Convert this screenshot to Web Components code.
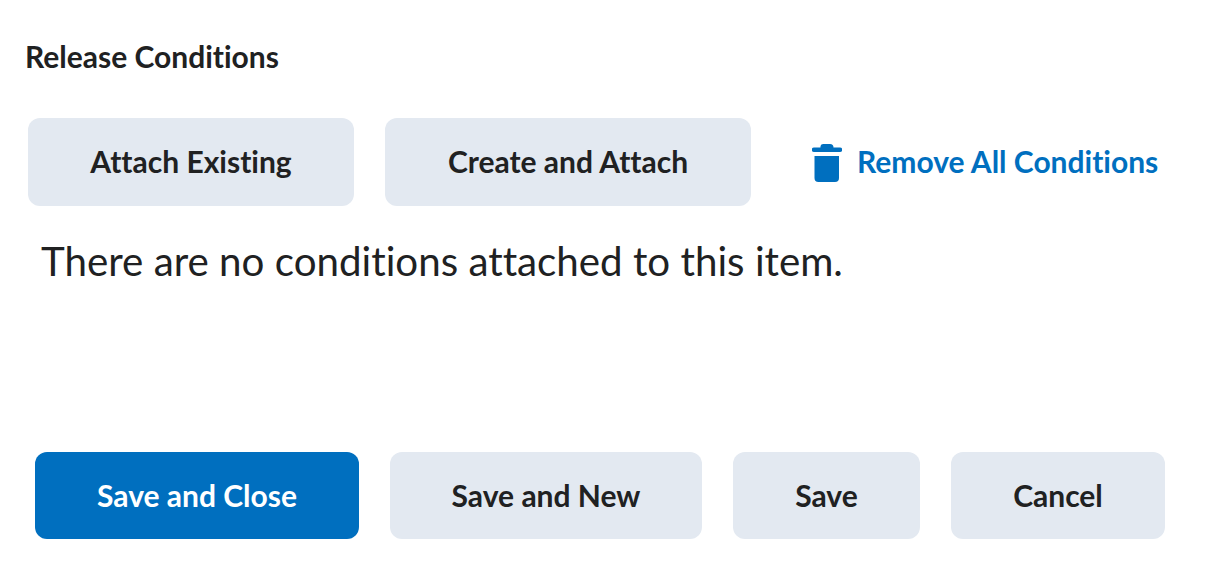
<!DOCTYPE html>
<html><head><meta charset="utf-8"><style>
html,body{margin:0;background:#fff}
body{font-family:Lato,"Noto Sans",sans-serif;color:#202122;width:1226px;height:572px;overflow:hidden;font-variant-ligatures:none}
</style></head><body>
<template id="t-btn"><style>
:host{display:inline-flex;align-items:center;justify-content:center;box-sizing:border-box;height:88px;padding-bottom:2px;border-radius:12px;background:#e3e9f1;color:#202122;font:700 30px Lato,sans-serif;white-space:nowrap;font-variant-ligatures:none}
:host([primary]){background:#006fbf;color:#fff}
</style><slot></slot></template>
<template id="t-link"><style>
:host{display:inline-flex;align-items:center;gap:15px;color:#006fbf;font:700 30px Lato,sans-serif;white-space:nowrap;font-variant-ligatures:none}
svg{width:30px;height:38px;display:block;margin-top:2px}
span{display:block;padding-bottom:2px}
</style><svg viewBox="0 0 30 38"><path fill="#006fbf" d="M11 0h7a3.500 3.500 0 0 1 3.500 3.500H28a2 2 0 0 1 0 4.500H2a2 2 0 0 1 0-4.500h6.500A3 3 0 0 1 11 0zM2.500 12h24.500v22a4 4 0 0 1-4 4H6.500a4 4 0 0 1-4-4z"/></svg><span><slot></slot></span></template>
<template id="t-page"><style>
:host{display:block;box-sizing:border-box;width:1226px;height:572px;padding:40px 0 0 25px}
h2{margin:0;font:700 30px/32px Lato,sans-serif;font-variant-ligatures:none}
.row{display:flex;align-items:center;margin:46px 0 0 3px}
.msg{margin:32px 0 0 16px;font:400 40.3px/46px Lato,sans-serif;font-variant-ligatures:none}
.foot{display:flex;margin:168px 0 0 10px}
.foot x-btn{height:87px}
</style>
<h2>Release Conditions</h2>
<div class="row">
<x-btn style="width:326px">Attach Existing</x-btn>
<x-btn style="width:366px;margin-left:31px">Create and Attach</x-btn>
<x-link style="margin-left:61px">Remove All Conditions</x-link>
</div>
<p class="msg">There are no conditions attached to this item.</p>
<div class="foot">
<x-btn primary style="width:324px">Save and Close</x-btn>
<x-btn style="width:312px;margin-left:31px">Save and New</x-btn>
<x-btn style="width:187px;margin-left:31px">Save</x-btn>
<x-btn style="width:214px;margin-left:31px">Cancel</x-btn>
</div>
</template>
<x-page></x-page>
<script>
for (const [n,t] of [['x-btn','t-btn'],['x-link','t-link'],['x-page','t-page']]) {
  customElements.define(n, class extends HTMLElement {
    constructor(){super();this.attachShadow({mode:'open'}).appendChild(document.getElementById(t).content.cloneNode(true));}
  });
}
</script>
</body></html>
